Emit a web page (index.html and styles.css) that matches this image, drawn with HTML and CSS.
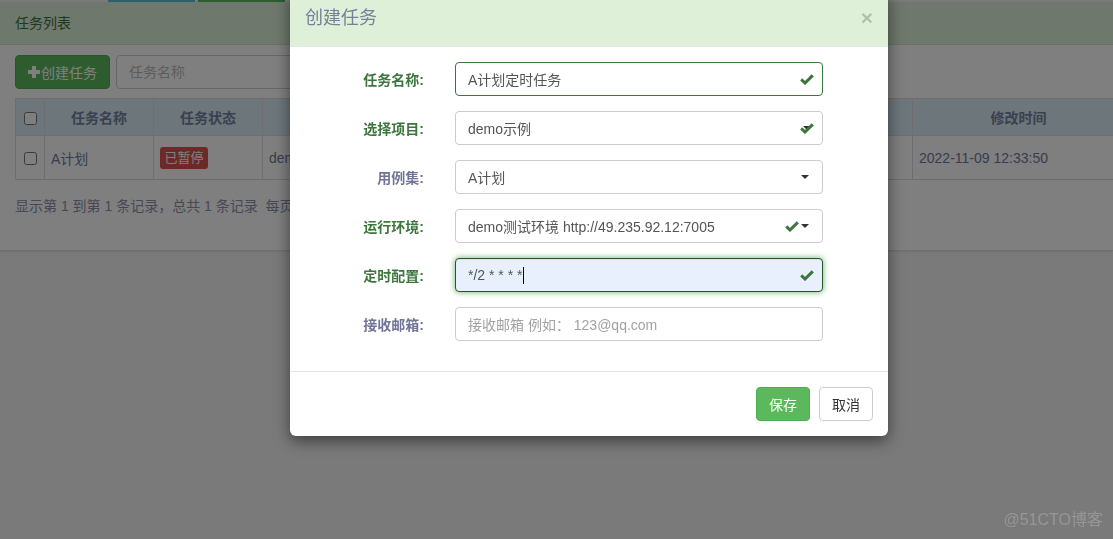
FILE: index.html
```html
<!DOCTYPE html>
<html lang="zh-CN">
<head>
<meta charset="utf-8">
<title>任务列表</title>
<link rel="stylesheet" href="styles.css">
</head>
<body>
<div class="page">
  <div class="tabs">
    <span class="tab tab-grey"></span>
    <span class="tab tab-blue"></span>
    <span class="tab tab-green"></span>
  </div>
  <section class="panel">
    <div class="panel-heading">任务列表</div>
    <div class="panel-body">
      <div class="toolbar">
        <button class="btn-create" type="button">
          <svg class="plus" width="12" height="12" viewBox="0 0 12 12"><rect x="4" y="0" width="4" height="12"/><rect x="0" y="4" width="12" height="4"/></svg>创建任务
        </button>
        <input class="search" type="text" placeholder="任务名称">
      </div>
      <div class="table-wrap">
        <table class="grid">
          <colgroup>
            <col class="c-check"><col class="c-name"><col class="c-state"><col class="c-proj"><col class="c-case"><col class="c-env"><col class="c-cron"><col class="c-time">
          </colgroup>
          <thead>
            <tr>
              <th><input type="checkbox"></th>
              <th>任务名称</th>
              <th>任务状态</th>
              <th></th>
              <th></th>
              <th></th>
              <th></th>
              <th>修改时间</th>
            </tr>
          </thead>
          <tbody>
            <tr>
              <td class="center"><input type="checkbox"></td>
              <td>A计划</td>
              <td><span class="badge-stop">已暂停</span></td>
              <td>dem</td>
              <td></td>
              <td></td>
              <td></td>
              <td>2022-11-09 12:33:50</td>
            </tr>
          </tbody>
        </table>
      </div>
      <div class="pager">显示第 1 到第 1 条记录，总共 1 条记录&nbsp;&nbsp;每页</div>
    </div>
  </section>
</div>

<div class="backdrop"></div>

<div class="modal">
  <div class="modal-header">
    <h4 class="modal-title">创建任务</h4>
    <span class="close">×</span>
  </div>
  <div class="modal-body">
    <div class="form-row ok-row">
      <label class="form-label">任务名称:</label>
      <div class="control control-ok">
        <span class="value">A计划定时任务</span>
        <svg class="check" width="14" height="11" viewBox="0 0 14 11"><path d="M1.2 5.4 L5 9 L12.8 1.4"/></svg>
      </div>
    </div>
    <div class="form-row ok-row">
      <label class="form-label">选择项目:</label>
      <div class="control">
        <span class="value">demo示例</span>
        <span class="stack">
          <span class="caret"></span>
          <svg class="check" width="14" height="11" viewBox="0 0 14 11"><path d="M1.2 5.4 L5 9 L12.8 1.4"/></svg>
        </span>
      </div>
    </div>
    <div class="form-row">
      <label class="form-label">用例集:</label>
      <div class="control">
        <span class="value">A计划</span>
        <span class="caret caret-end"></span>
      </div>
    </div>
    <div class="form-row ok-row">
      <label class="form-label">运行环境:</label>
      <div class="control">
        <span class="value">demo测试环境 http://49.235.92.12:7005</span>
        <svg class="check" width="14" height="11" viewBox="0 0 14 11"><path d="M1.2 5.4 L5 9 L12.8 1.4"/></svg>
        <span class="caret caret-after"></span>
      </div>
    </div>
    <div class="form-row ok-row">
      <label class="form-label">定时配置:</label>
      <div class="control control-focus">
        <span class="value">*/2 * * * *<span class="cursor"></span></span>
        <svg class="check" width="14" height="11" viewBox="0 0 14 11"><path d="M1.2 5.4 L5 9 L12.8 1.4"/></svg>
      </div>
    </div>
    <div class="form-row">
      <label class="form-label">接收邮箱:</label>
      <div class="control">
        <span class="value placeholder">接收邮箱 例如： 123@qq.com</span>
      </div>
    </div>
  </div>
  <div class="modal-footer">
    <button class="btn btn-save" type="button">保存</button>
    <button class="btn btn-cancel" type="button">取消</button>
  </div>
</div>

<div class="watermark">@51CTO博客</div>
</body>
</html>
```
FILE: styles.css
```css
* { box-sizing: border-box; }

html, body {
  margin: 0;
  height: 100%;
  overflow: hidden;
}

body {
  background: #f4f4f4;
  font-family: "Liberation Sans", "Noto Sans CJK SC", sans-serif;
  font-size: 14px;
  color: #72789a;
}

.page {
  width: 100%;
}

/* top tab strip */
.tabs {
  display: flex;
  height: 2px;
  gap: 3px;
}
.tab { display: block; height: 2px; }
.tab-grey { width: 105px; background: #f4f4f4; }
.tab-blue { width: 87px; background: #5bc0de; }
.tab-green { width: 87px; background: #5cb85c; }

/* panel */
.panel {
  background: #fff;
  border-bottom: 1px solid #dcdcdc;
  box-shadow: 0 1px 2px rgba(0,0,0,.08);
}
.panel-heading {
  height: 43px;
  line-height: 42px;
  padding: 0 15px;
  background: #dff0d8;
  border-bottom: 1px solid #cfe3c6;
  color: #3c763d;
  font-size: 14px;
}
.panel-body {
  padding: 10px 15px 10px;
}

.toolbar {
  display: flex;
  gap: 6px;
  height: 34px;
  margin-bottom: 9px;
}
.btn-create {
  display: flex;
  align-items: center;
  gap: 1px;
  height: 34px;
  padding: 0 12px;
  border: 1px solid #4cae4c;
  border-radius: 4px;
  background: #5cb85c;
  color: #fff;
  font-family: inherit;
  font-size: 14px;
}
.plus { fill: #fff; }
.search {
  width: 260px;
  height: 34px;
  padding: 6px 12px;
  border: 1px solid #ccc;
  border-radius: 4px;
  font-family: inherit;
  font-size: 14px;
  color: #555;
}
.search::placeholder { color: #bbb; }

/* table */
.table-wrap {
  width: 100%;
}
.grid {
  width: 1109px;
  border-collapse: collapse;
  table-layout: fixed;
  border: 1px solid #dcdcdc;
}
.c-check { width: 29px; }
.c-name { width: 109px; }
.c-state { width: 109px; }
.c-proj { width: 160px; }
.c-case { width: 140px; }
.c-env { width: 180px; }
.c-cron { width: 170px; }
.c-time { width: 212px; }

.grid th {
  height: 37px;
  background: #d9edf7;
  border: 1px solid #dcdcdc;
  font-weight: bold;
  text-align: center;
  color: #76809e;
  padding: 0 6px;
}
.grid td {
  height: 44px;
  border: 1px solid #dcdcdc;
  padding: 0 6px;
  white-space: nowrap;
  overflow: hidden;
}
.grid input[type="checkbox"] {
  margin: 0;
  width: 13px;
  height: 13px;
  vertical-align: middle;
}
.grid th:first-child, .grid td.center { text-align: center; padding: 0; }

.badge-stop {
  display: inline-block;
  height: 22px;
  line-height: 22px;
  padding: 0 4.5px;
  border-radius: 3px;
  background: #d9534f;
  color: #fff;
  font-size: 13px;
}

.pager {
  margin: 16px 0 24px;
  line-height: 20px;
  color: #8e90a6;
}

/* backdrop */
.backdrop {
  position: fixed;
  inset: 0;
  background: rgba(0,0,0,.5);
  z-index: 10;
}

/* modal */
.modal {
  position: absolute;
  left: 290px;
  top: -10px;
  width: 598px;
  background: #fff;
  border-radius: 6px;
  box-shadow: 0 5px 15px rgba(0,0,0,.5);
  z-index: 20;
  overflow: hidden;
}
.modal-header {
  display: flex;
  justify-content: space-between;
  align-items: flex-start;
  padding: 15px;
  background: #dff0d8;
  border-bottom: 1px solid #e5e5e5;
}
.modal-title {
  margin: 0;
  font-size: 18px;
  font-weight: normal;
  line-height: 26px;
  color: #76809c;
}
.close {
  font-size: 21px;
  font-weight: bold;
  line-height: 1;
  color: #000;
  opacity: .2;
  margin-top: 2px;
}

.modal-body {
  padding: 15px 0 30px;
  display: flex;
  flex-direction: column;
  gap: 15px;
}
.form-row {
  display: grid;
  grid-template-columns: 134px 368px;
  column-gap: 31px;
  align-items: center;
}
.form-label {
  text-align: right;
  font-weight: bold;
  font-size: 14px;
  color: #707597;
}
.ok-row .form-label { color: #3c763d; }

.control {
  display: flex;
  align-items: center;
  height: 34px;
  padding: 0 8px 0 12px;
  border: 1px solid #ccc;
  border-radius: 4px;
  background: #fff;
  color: #555;
  font-size: 14px;
}
.control-ok { border-color: #3c763d; }
.control-focus {
  background: #e8f0fe;
  border-color: #2b542c;
  box-shadow: inset 0 1px 1px rgba(0,0,0,.075), 0 0 6px #67b168;
}
.value {
  flex: 1;
  white-space: nowrap;
  display: flex;
  align-items: center;
}
.placeholder { color: #a2a2a2; }
.cursor {
  display: inline-block;
  width: 1px;
  height: 17px;
  margin-left: 1px;
  background: #000;
}

.check { flex: none; display: block; }
.check path {
  fill: none;
  stroke: #3c763d;
  stroke-width: 3;
  stroke-linejoin: miter;
}

.caret {
  display: block;
  width: 0;
  height: 0;
  border-left: 4px solid transparent;
  border-right: 4px solid transparent;
  border-top: 4px solid #333;
}
.caret-end { margin-right: 5px; }
.caret-after { margin-left: 2px; margin-right: 5px; }

.stack {
  display: grid;
  align-items: center;
  justify-items: center;
}
.stack > * { grid-area: 1 / 1; }

.modal-footer {
  display: flex;
  justify-content: flex-end;
  gap: 9px;
  padding: 15px;
  border-top: 1px solid #e5e5e5;
}
.btn {
  height: 34px;
  padding: 0 12px;
  border-radius: 4px;
  font-family: inherit;
  font-size: 14px;
  border: 1px solid #ccc;
}
.btn-save {
  background: #5cb85c;
  border-color: #4cae4c;
  color: #fff;
}
.btn-cancel {
  background: #fff;
  color: #333;
}

.watermark {
  position: fixed;
  right: 10px;
  bottom: 9px;
  z-index: 30;
  font-size: 16px;
  color: #9a9a9a;
  opacity: .9;
}
```
